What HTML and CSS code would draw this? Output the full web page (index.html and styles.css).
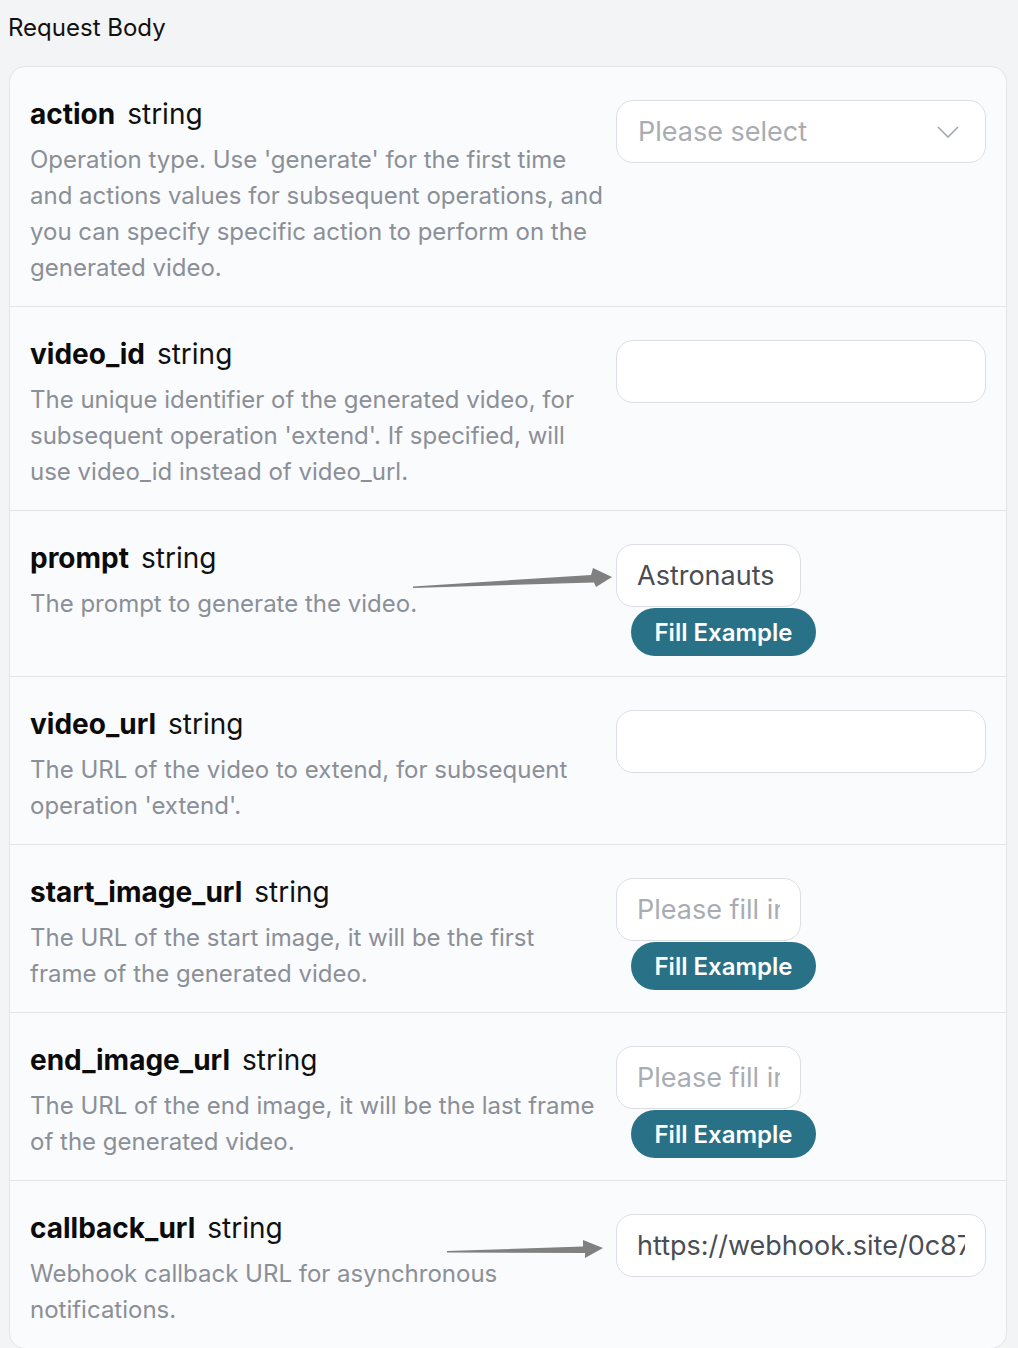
FILE: index.html
```html
<!DOCTYPE html>
<html lang="en">
<head>
<meta charset="utf-8">
<title>Request Body</title>
<link rel="stylesheet" href="styles.css">
</head>
<body>
<div class="page">
  <h2 class="section-title">Request Body</h2>
  <div class="card">
    <div class="param">
      <div class="info">
        <div class="name-line"><span class="name">action</span><span class="type">string</span></div>
        <p class="desc">Operation type. Use 'generate' for the first time and actions values for subsequent operations, and you can specify specific action to perform on the generated video.</p>
      </div>
      <div class="control">
        <div class="select">
          <span class="placeholder">Please select</span>
          <svg class="chevron" width="22" height="12" viewBox="0 0 22 12"><path d="M1 1 L11 11 L21 1" fill="none" stroke="#a3a7ae" stroke-width="1.6"/></svg>
        </div>
      </div>
    </div>

    <div class="param">
      <div class="info">
        <div class="name-line"><span class="name">video_id</span><span class="type">string</span></div>
        <p class="desc">The unique identifier of the generated video, for subsequent operation 'extend'. If specified, will use video_id instead of video_url.</p>
      </div>
      <div class="control">
        <input class="input wide" type="text" value="">
      </div>
    </div>

    <div class="param">
      <div class="info">
        <div class="name-line"><span class="name">prompt</span><span class="type">string</span></div>
        <p class="desc">The prompt to generate the video.</p>
      </div>
      <div class="control">
        <input class="input short" type="text" value="Astronauts">
        <button class="fill-btn">Fill Example</button>
      </div>
      <svg class="arrow arrow-prompt" width="210" height="24" viewBox="0 0 210 24">
        <polygon points="0,19.5 178,8 180,1 199,10 183,20 181,15.5 0,21" fill="#808080"/>
      </svg>
    </div>

    <div class="param">
      <div class="info">
        <div class="name-line"><span class="name">video_url</span><span class="type">string</span></div>
        <p class="desc">The URL of the video to extend, for subsequent operation 'extend'.</p>
      </div>
      <div class="control">
        <input class="input wide" type="text" value="">
      </div>
    </div>

    <div class="param">
      <div class="info">
        <div class="name-line"><span class="name">start_image_url</span><span class="type">string</span></div>
        <p class="desc">The URL of the start image, it will be the first frame of the generated video.</p>
      </div>
      <div class="control">
        <input class="input short" type="text" placeholder="Please fill in">
        <button class="fill-btn">Fill Example</button>
      </div>
    </div>

    <div class="param">
      <div class="info">
        <div class="name-line"><span class="name">end_image_url</span><span class="type">string</span></div>
        <p class="desc">The URL of the end image, it will be the last frame of the generated video.</p>
      </div>
      <div class="control">
        <input class="input short" type="text" placeholder="Please fill in">
        <button class="fill-btn">Fill Example</button>
      </div>
    </div>

    <div class="param">
      <div class="info">
        <div class="name-line"><span class="name">callback_url</span><span class="type">string</span></div>
        <p class="desc">Webhook callback URL for asynchronous notifications.</p>
      </div>
      <div class="control">
        <input class="input wide" type="text" value="https://webhook.site/0c87a1b2-4d3e">
      </div>
      <svg class="arrow arrow-callback" width="160" height="22" viewBox="0 0 160 22">
        <polygon points="0,12 136,7.5 136,1 156,9 138,19 138,14 0,13.5" fill="#808080"/>
      </svg>
    </div>
  </div>
</div>
</body>
</html>
```

FILE: styles.css
```css
html, body {
  margin: 0;
  padding: 0;
  background: #f3f4f6;
}
body {
  font-family: Inter, "Noto Sans", "Liberation Sans", sans-serif;
  color: #111;
}
.page {
  padding: 0 11px 0 9px;
}
.section-title {
  margin: 0 0 0 -1px;
  padding: 12px 0 0 0;
  font-size: 24px;
  font-weight: 400;
  line-height: 32px;
  height: 54px;
  color: #111;
}
.card {
  background: #fafbfd;
  border: 1.5px solid #e2e4e9;
  border-radius: 16px;
  overflow: hidden;
}
.param {
  position: relative;
  display: flex;
  gap: 11px;
  padding: 27px 20px 20px 20px;
  border-bottom: 1.5px solid #e2e4e9;
}
.param:last-child {
  border-bottom: none;
}
.info {
  flex: 1;
  min-width: 0;
}
.name-line {
  line-height: 40px;
  height: 40px;
  font-size: 28px;
  white-space: nowrap;
}
.name {
  font-weight: 700;
  color: #0b0b0b;
  margin-right: 12px;
}
.type {
  font-weight: 400;
  color: #111;
}
.desc {
  margin: 8px 0 0 0;
  font-size: 24px;
  line-height: 36px;
  color: #8b8f97;
}
.control {
  width: 370px;
  flex: none;
  padding-top: 6px;
  display: flex;
  flex-direction: column;
  align-items: flex-start;
}
.select, .input {
  box-sizing: border-box;
  height: 63px;
  margin: 0;
  background: #fff;
  border: 1.5px solid #dcdee4;
  border-radius: 17px;
  padding: 0 20px;
  font-family: Inter, "Noto Sans", "Liberation Sans", sans-serif;
  font-size: 27px;
  color: #4a4d53;
  outline: none;
}
.select {
  width: 370px;
  display: flex;
  align-items: center;
  justify-content: space-between;
  padding-left: 21px;
}
.chevron {
  margin-right: 6px;
}
.input.wide {
  width: 370px;
}
.input.short {
  width: 185px;
}
.input::placeholder {
  color: #a9acb3;
  opacity: 1;
}
.placeholder {
  color: #a9acb3;
}
.fill-btn {
  margin: 1px 0 0 15px;
  width: 185px;
  height: 48px;
  border: none;
  border-radius: 24px;
  background: #287187;
  color: #fff;
  font-family: Inter, "Noto Sans", "Liberation Sans", sans-serif;
  font-size: 24px;
  font-weight: 600;
  padding: 0;
}
.arrow {
  position: absolute;
}
.arrow-prompt {
  left: 403px;
  top: 56px;
}
.arrow-callback {
  left: 437px;
  top: 58px;
}
```
